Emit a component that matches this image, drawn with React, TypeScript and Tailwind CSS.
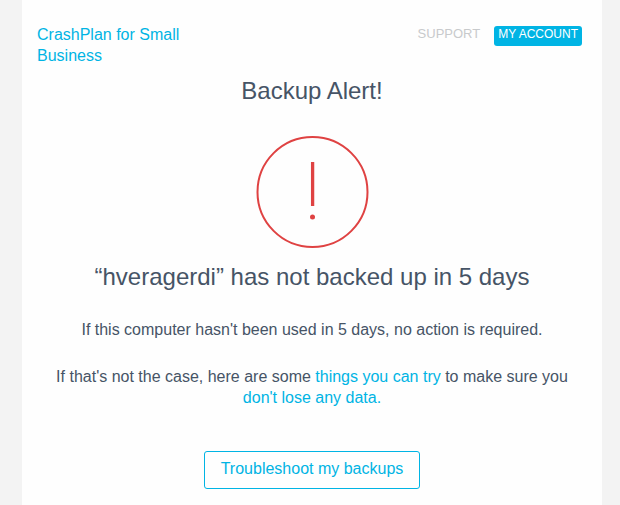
export default function App() {
  return (
    <div className="min-h-screen bg-[#f3f3f3] px-[22px] font-['Liberation_Sans',Arial,sans-serif] text-[16px] leading-[21px] text-[#465466] max-sm:pr-[18px]">
      <main className="mx-auto min-h-screen max-w-[580px] bg-[#fefefe] px-[15px] pt-6 pb-4 text-center">
        <header className="flex items-start justify-between pr-[5px] text-left">
          <a href="#home" className="w-[160px] text-[#00b4e4]">CrashPlan for Small Business</a>
          <nav className="flex items-center gap-[14px] pt-[2px] leading-4">
            <a href="#support" className="pb-1 text-[13px] text-[#c8cacc]">SUPPORT</a>
            <a href="#account" className="rounded-[3px] bg-[#00b4e4] px-1 pb-1 text-[12px] text-white">MY ACCOUNT</a>
          </nav>
        </header>
        <h1 className="mt-[9px] text-[24px] leading-8">Backup Alert!</h1>
        <svg className="mx-auto mt-[28px] block h-[114px] w-[114px]" viewBox="0 0 114 114" fill="none" role="img" aria-label="Alert">
          <circle cx="57.5" cy="57" r="55" stroke="#df4242" strokeWidth="2" />
          <path d="M57.6 27v44" stroke="#df4242" strokeWidth="3.3" />
          <circle cx="57.5" cy="82" r="2.5" fill="#df4242" />
        </svg>
        <h2 className="mt-3 text-[24px] leading-8">“hveragerdi” has not backed up in 5 days</h2>
        <p className="mt-[26px]">If this computer hasn't been used in 5 days, no action is required.</p>
        <p className="mt-[26px]">
          If that's not the case, here are some <a href="#try" className="text-[#00b4e4]">things you can try</a> to make sure you <a href="#data" className="text-[#00b4e4]">don't lose any data.</a>
        </p>
        <button type="button" className="mt-[43px] h-[38px] rounded-[3px] border border-[#00b4e4] px-4 pb-1 text-[#00b4e4]">Troubleshoot my backups</button>
      </main>
    </div>
  );
}
